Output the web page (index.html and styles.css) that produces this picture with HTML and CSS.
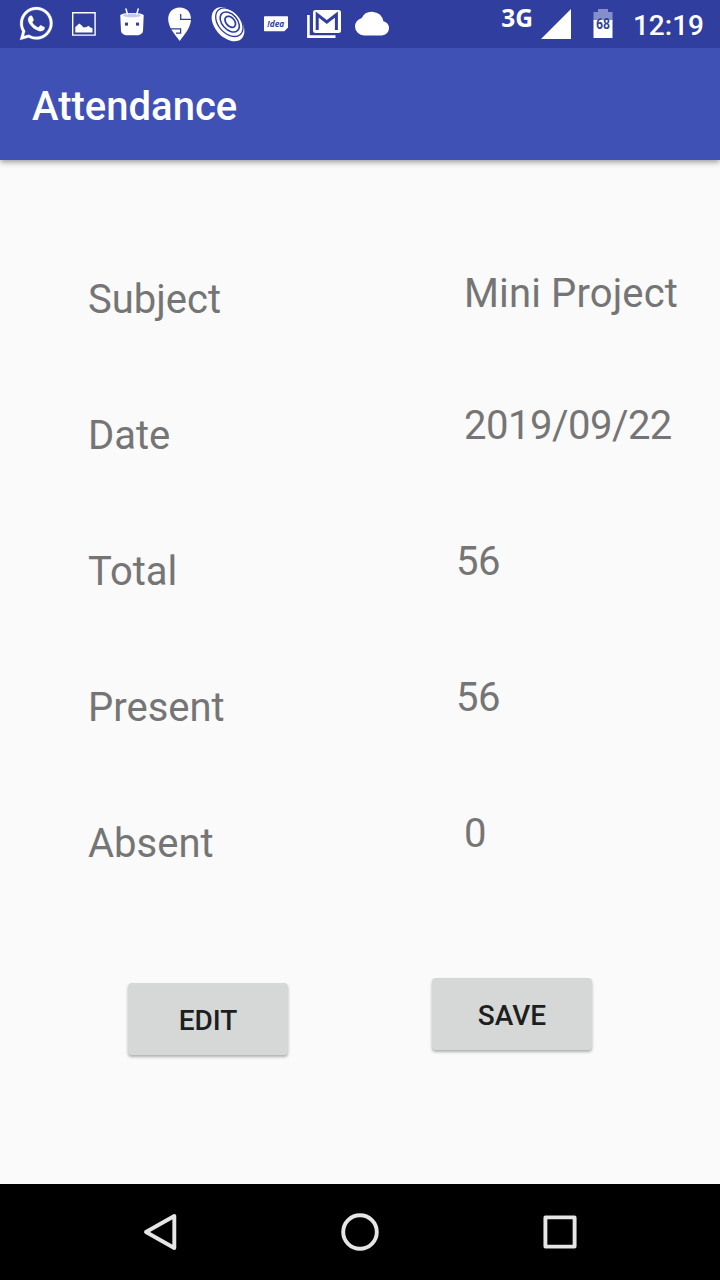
FILE: index.html
```html
<!DOCTYPE html>
<html lang="en">
<head>
<meta charset="utf-8">
<title>Attendance</title>
<link rel="stylesheet" href="styles.css">
</head>
<body>
<div class="screen">
  <div class="status-bar">
    <div class="notifications">
      <svg class="status-icon" viewBox="12 0 48 48"><path transform="translate(16.6 3.8) scale(1.64)" stroke="#fff" stroke-width=".15" d="M12.04 2C6.58 2 2.13 6.45 2.13 11.91C2.13 13.66 2.59 15.36 3.45 16.86L2.05 22L7.3 20.62C8.75 21.41 10.38 21.83 12.04 21.83C17.5 21.83 21.95 17.38 21.95 11.92C21.95 9.27 20.92 6.78 19.05 4.91C17.18 3.03 14.69 2 12.04 2M12.05 3.67C14.25 3.67 16.31 4.53 17.87 6.09C19.42 7.65 20.28 9.72 20.28 11.92C20.28 16.46 16.58 20.15 12.04 20.15C10.56 20.15 9.11 19.76 7.85 19L7.55 18.83L4.43 19.65L5.26 16.61L5.06 16.29C4.24 15 3.8 13.47 3.8 11.91C3.81 7.37 7.5 3.67 12.05 3.67M8.53 7.33C8.37 7.33 8.1 7.39 7.87 7.64C7.65 7.89 7 8.5 7 9.71C7 10.93 7.89 12.1 8 12.27C8.14 12.44 9.76 14.94 12.25 16C12.84 16.27 13.3 16.42 13.66 16.53C14.25 16.72 14.79 16.69 15.22 16.63C15.7 16.56 16.68 16.03 16.89 15.45C17.1 14.87 17.1 14.38 17.04 14.27C16.97 14.17 16.81 14.11 16.56 14C16.31 13.86 15.09 13.26 14.87 13.18C14.64 13.1 14.5 13.06 14.31 13.3C14.15 13.55 13.67 14.11 13.53 14.27C13.38 14.44 13.24 14.46 13 14.34C12.74 14.21 11.94 13.95 11 13.11C10.26 12.45 9.77 11.64 9.62 11.39C9.5 11.15 9.61 11 9.73 10.89C9.84 10.78 10 10.6 10.1 10.45C10.23 10.31 10.27 10.2 10.35 10.04C10.43 9.87 10.39 9.73 10.33 9.61C10.27 9.5 9.77 8.26 9.56 7.77C9.36 7.29 9.16 7.35 9 7.34Z"/></svg>
      <svg class="status-icon" viewBox="60 0 48 48"><path fill="none" stroke="#fff" stroke-width="1.4" d="M72.7 12.7H95.1V35.1H72.7Z"/><path d="M75.3 32.5V27L77 25.5L79.3 23.4L81.5 25.2L83.5 27.5L86.5 27L88.5 25.8L90 27.2L92.5 28.2V32.5Z"/></svg>
      <svg class="status-icon" viewBox="108 0 48 48"><path d="M120.3 15.5C120.3 12.2 143.7 12.2 143.7 15.5L143 31C142.7 33.6 140 35.3 137 35.3H127C124 35.3 121.4 33.6 121 31Z"/><ellipse cx="132" cy="15.4" rx="9" ry="2" fill="#c5caec"/><path fill="none" stroke="#fff" stroke-width="1.5" stroke-linecap="round" d="M126 9L127.4 14M138.2 9L136.8 14"/><rect class="cutout" x="125" y="22.6" width="3" height="3"/><rect class="cutout" x="136" y="22.6" width="3" height="3"/></svg>
      <svg class="status-icon" viewBox="156 0 48 48"><path d="M179.7 7.5C187 7.5 191 12.5 191 19C191 27 185 34 179.7 41C174.5 34 168.2 27 168.2 19C168.2 12.5 172.5 7.5 179.7 7.5Z"/><path fill="none" stroke="#303f9f" stroke-width="1.3" d="M180.7 14V19.3H191.5M169 28.8H180.6V33.2H176"/></svg>
      <svg class="status-icon" viewBox="204 0 48 48"><ellipse cx="228" cy="24.2" rx="13" ry="19.8" transform="rotate(-42 228 24.2)"/><g fill="none" stroke="#303f9f" transform="rotate(-42 229.5 22.5)"><ellipse cx="229.6" cy="22.2" rx="11" ry="16.4" stroke-width="1.3"/><ellipse cx="230" cy="22.3" rx="7.6" ry="11.6" stroke-width="1.5"/><ellipse cx="230.5" cy="22.5" rx="4.2" ry="6.4" stroke-width="1.8"/></g></svg>
      <svg class="status-icon" viewBox="252 0 48 48"><path d="M264.6 16.2H287.4Q288 16.2 288 16.8V27.5L284.3 31.2H264.6Q264 31.2 264 30.6V16.8Q264 16.2 264.6 16.2Z"/><text class="idea" x="275.8" y="26.7" text-anchor="middle" textLength="17" lengthAdjust="spacingAndGlyphs">!dea</text></svg>
      <svg class="status-icon" viewBox="300 0 48 48"><path d="M315.5 10H338.5Q341 10 341 12.5V30.5Q341 33 338.5 33H315.5Q313 33 313 30.5V12.5Q313 10 315.5 10Z"/><path fill="none" stroke="#303f9f" stroke-width="3" d="M317.2 30V14.5L326.8 22L336.4 14.5V30"/><path fill="none" stroke="#fff" stroke-width="2.6" d="M308.4 15V36.6H335.5"/></svg>
      <svg class="status-icon" viewBox="348 0 48 48"><path d="M383.4 21.2A11.7 11.7 0 0 0 361.5 18.3A9 9 0 0 0 355 26.6A8.9 8.9 0 0 0 364 35.4H381.8A7.2 7.2 0 0 0 389 28.2A7.3 7.3 0 0 0 383.4 21.2Z"/></svg>
    </div>
    <div class="system">
      <span class="network">3G</span>
      <svg class="signal" viewBox="0 0 30 30"><path d="M30 0V30H0Z"/></svg>
      <svg class="battery" viewBox="0 0 20 29"><path fill="#858fca" d="M5 0H15V3H19.5V12H.5V3H5Z"/><path d="M.5 11H19.5V29H.5Z"/><text class="level" x="10" y="20" text-anchor="middle" textLength="14" lengthAdjust="spacingAndGlyphs">68</text></svg>
      <span class="clock">12:19</span>
    </div>
  </div>
  <header class="app-bar">Attendance</header>
  <main class="content">
    <section class="labels">
      <div class="field">Subject</div>
      <div class="field">Date</div>
      <div class="field">Total</div>
      <div class="field">Present</div>
      <div class="field">Absent</div>
      <button class="button edit">EDIT</button>
    </section>
    <section class="values">
      <div class="field subject">Mini Project</div>
      <div class="field date">2019/09/22</div>
      <div class="field count">56</div>
      <div class="field count">56</div>
      <div class="field">0</div>
      <button class="button save">SAVE</button>
    </section>
  </main>
  <nav class="nav-bar">
    <svg class="nav-icon" viewBox="0 0 48 48"><path d="M38.3 8V40L10 24Z"/></svg>
    <svg class="nav-icon" viewBox="0 0 48 48"><circle cx="24" cy="24" r="16.8"/></svg>
    <svg class="nav-icon" viewBox="0 0 48 48"><rect x="9.4" y="9.4" width="29.2" height="29.2"/></svg>
  </nav>
</div>
</body>
</html>
```
FILE: styles.css
```css
body {
  margin: 0;
  font-family: Roboto, sans-serif;
}

.screen {
  display: flex;
  flex-direction: column;
  width: 720px;
  height: 1280px;
  overflow: hidden;
  background: #fafafa;
}

.status-bar {
  position: relative;
  z-index: 1;
  display: flex;
  justify-content: space-between;
  height: 48px;
  padding: 0 16px 0 12px;
  background: #303f9f;
  color: #fff;
  fill: #fff;
}

.notifications,
.system {
  display: flex;
}

.status-icon {
  width: 48px;
  height: 48px;
}

.cutout {
  fill: #303f9f;
}

.idea {
  fill: #303f9f;
  font: italic bold 9px "Open Sans", sans-serif;
}

.network {
  margin-right: 8px;
  font: bold 24.5px/35px "Noto Sans", sans-serif;
}

.signal {
  width: 30px;
  height: 30px;
  margin: 9px 22px 0 0;
}

.battery {
  width: 20px;
  height: 29px;
  margin: 9px 20px 0 0;
}

.level {
  fill: #303f9f;
  font: bold 14px Roboto, sans-serif;
}

.clock {
  font-size: 28px;
  font-weight: 500;
  line-height: 52px;
}

.app-bar {
  height: 112px;
  padding-left: 32px;
  box-sizing: border-box;
  background: #3f51b5;
  color: #fff;
  font-size: 40px;
  font-weight: 500;
  line-height: 118px;
  box-shadow: 0 2px 6px rgba(0, 0, 0, .4);
}

.content {
  display: grid;
  grid-template-columns: 344px 1fr;
  flex: 1;
  padding-left: 88px;
}

.labels,
.values {
  display: flex;
  flex-direction: column;
  align-items: flex-start;
  gap: 88px;
}

.labels {
  padding-top: 116px;
}

.values {
  padding-top: 110px;
}

.field {
  color: #757575;
  font-size: 40px;
  line-height: 48px;
  white-space: nowrap;
}

.values .field {
  margin-left: 32px;
}

.values .count {
  margin-left: 24px;
  letter-spacing: -.5px;
}

.values .subject {
  margin-bottom: -4px;
  letter-spacing: .13px;
}

.date {
  letter-spacing: -.5px;
}

.button {
  width: 160px;
  height: 72px;
  padding: 3px 0 0;
  border: 0;
  border-radius: 4px;
  background: #d6d8d7;
  color: #1d1e1e;
  font: 500 28px/69px Roboto, sans-serif;
  box-shadow: 0 2px 3px rgba(0, 0, 0, .3);
}

.edit {
  margin: 27px 0 0 40px;
}

.save {
  margin-top: 32px;
}

.nav-bar {
  display: flex;
  align-items: center;
  justify-content: center;
  gap: 152px;
  height: 96px;
  background: #000;
}

.nav-icon {
  width: 48px;
  height: 48px;
  fill: none;
  stroke: #e6e6e6;
  stroke-width: 3.9;
  stroke-linejoin: round;
}
```
